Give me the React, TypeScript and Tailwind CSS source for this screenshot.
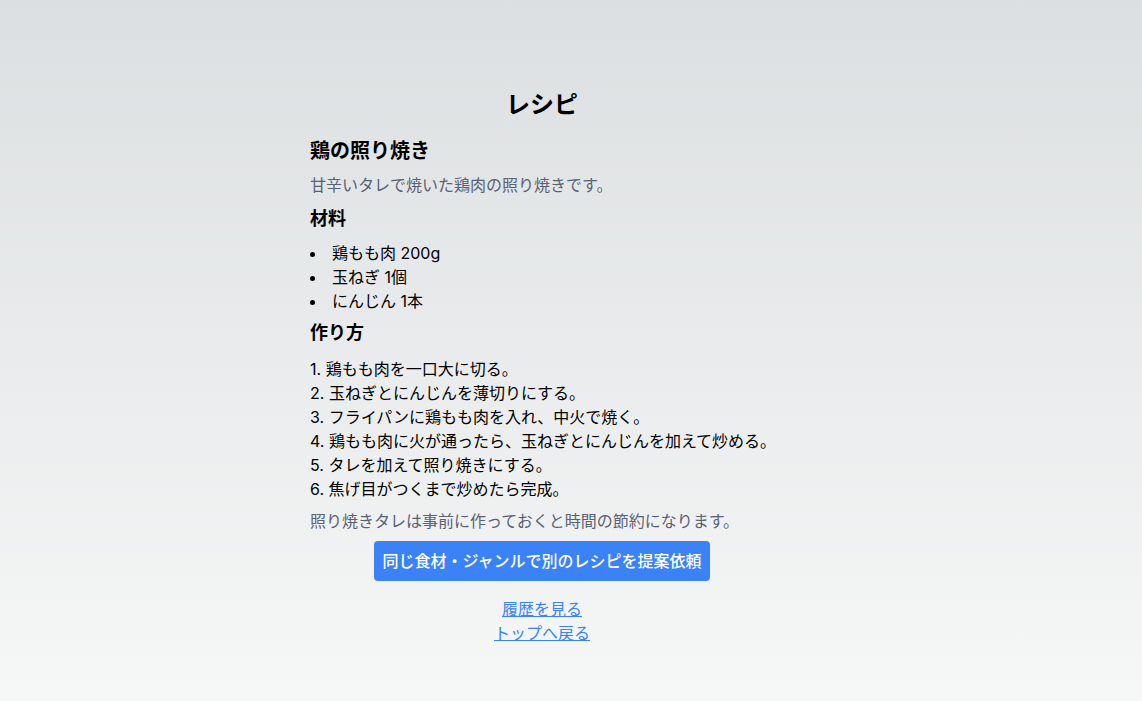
const ingredients = ["鶏もも肉 200g", "玉ねぎ 1個", "にんじん 1本"];

const steps = [
  "鶏もも肉を一口大に切る。",
  "玉ねぎとにんじんを薄切りにする。",
  "フライパンに鶏もも肉を入れ、中火で焼く。",
  "鶏もも肉に火が通ったら、玉ねぎとにんじんを加えて炒める。",
  "タレを加えて照り焼きにする。",
  "焦げ目がつくまで炒めたら完成。",
];

export default function App() {
  return (
    <div
      className="min-h-[701px] bg-gradient-to-b from-[#dcdfe1] to-[#f6f7f7] text-black"
      style={{ fontFamily: 'Inter, "Noto Sans CJK JP", sans-serif' }}
    >
      <div className="ml-[310px] w-[464px] pt-[89px] pb-14">
        <h1 className="text-2xl font-bold text-center mb-4">レシピ</h1>

        <h2 className="text-xl font-bold mb-2">鶏の照り焼き</h2>
        <p className="text-base text-[#596273] mb-2">甘辛いタレで焼いた鶏肉の照り焼きです。</p>

        <h3 className="text-lg font-bold mb-2">材料</h3>
        <ul className="list-disc list-inside mb-1.5">
          {ingredients.map((item) => (
            <li key={item} className="leading-6">
              {item}
            </li>
          ))}
        </ul>

        <h3 className="text-lg font-bold mb-2.5">作り方</h3>
        <div className="mb-2 whitespace-nowrap">
          {steps.map((step, i) => (
            <p key={i} className="leading-6">
              {i + 1}. {step}
            </p>
          ))}
        </div>

        <p className="text-[#596273] mb-2 whitespace-nowrap">照り焼きタレは事前に作っておくと時間の節約になります。</p>

        <div className="flex justify-center mb-4">
          <button className="bg-[#3b82f6] text-white font-medium px-2 py-2 rounded">
            同じ食材・ジャンルで別のレシピを提案依頼
          </button>
        </div>

        <div className="flex flex-col items-center">
          <a href="#" className="text-[#3b82f6] underline">
            履歴を見る
          </a>
          <a href="#" className="text-[#3b82f6] underline">
            トップへ戻る
          </a>
        </div>
      </div>
    </div>
  );
}
